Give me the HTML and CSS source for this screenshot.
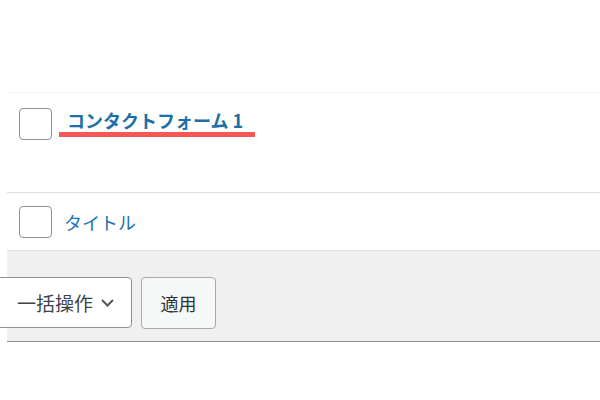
FILE: index.html
```html
<!doctype html>
<html lang="ja">
<head>
	<meta charset="UTF-8">
	<title>お問い合わせフォーム</title>
	<link rel="stylesheet" href="styles.css">
</head>
<body>

	<div id="container">

		<div class="list-table">

			<div class="row row-first">
				<span class="check"></span>
				<a href="#" class="row-title">コンタクトフォーム 1</a>
			</div>

			<div class="row row-foot">
				<span class="check"></span>
				<a href="#" class="col-title">タイトル</a>
			</div>

		</div>

		<div class="tablenav">
			<div class="bulk-select">
				<span>一括操作</span>
				<svg width="13" height="8" viewBox="0 0 13 8">
					<path d="M1 1 L6.5 6.5 L12 1" fill="none" stroke="#50575e" stroke-width="2"/>
				</svg>
			</div>
			<a href="#" class="button">適用</a>
		</div>

	</div>

</body>
</html>
```

FILE: styles.css
```css
body {
	margin: 0px;
	padding: 0px;
	background: #fff;
	font-family: "Noto Sans CJK JP", "Noto Sans", sans-serif;
}

a {
	text-decoration: none;
}

#container {
	margin: 92px 0px 0px 7px;
}

/*一覧テーブル*/
.list-table .row {
	display: flex;
	align-items: flex-start;
	gap: 14px;
	padding-left: 12px;
}

.list-table .row-first {
	border-top: 1px solid #f3f3f4;
	height: 84px;
	padding-top: 15px;
}

.list-table .row-foot {
	border-top: 1px solid #dcdcde;
	padding-top: 13px;
	padding-bottom: 12px;
}

.check {
	display: block;
	width: 31px;
	height: 30px;
	border: 1px solid #8c8f94;
	border-radius: 4px;
	background: #fff;
	flex: none;
}

.row-title {
	position: relative;
	margin-top: 2px;
	margin-left: 1px;
	font-size: 18px;
	line-height: 20px;
	font-weight: bold;
	color: #1d6fa8;
}

/*赤いマーカー線*/
.row-title::after {
	content: "";
	position: absolute;
	left: -8px;
	right: -12px;
	top: 22px;
	height: 5px;
	background: #f55656;
}

.col-title {
	margin-top: 4px;
	margin-left: -2px;
	font-size: 18px;
	line-height: 24px;
	color: #2271b1;
}

/*一括操作*/
.tablenav {
	display: flex;
	align-items: flex-start;
	gap: 9px;
	background: #f0f0f1;
	border-top: 1px solid #dcdcde;
	border-bottom: 1px solid #8c8f94;
	padding: 26px 0px 12px 0px;
}

.bulk-select {
	box-sizing: border-box;
	display: flex;
	align-items: center;
	gap: 8px;
	margin-left: -20px;
	width: 145px;
	height: 51px;
	padding-left: 29px;
	border: 1px solid #8c8f94;
	border-radius: 4px;
	background: #fff;
	font-size: 19px;
	color: #3c434a;
}

.button {
	box-sizing: border-box;
	display: flex;
	align-items: center;
	justify-content: center;
	width: 75px;
	height: 52px;
	border: 1px solid #a7aaad;
	border-radius: 4px;
	background: #f6f7f7;
	font-size: 18px;
	color: #2c3338;
}
```
